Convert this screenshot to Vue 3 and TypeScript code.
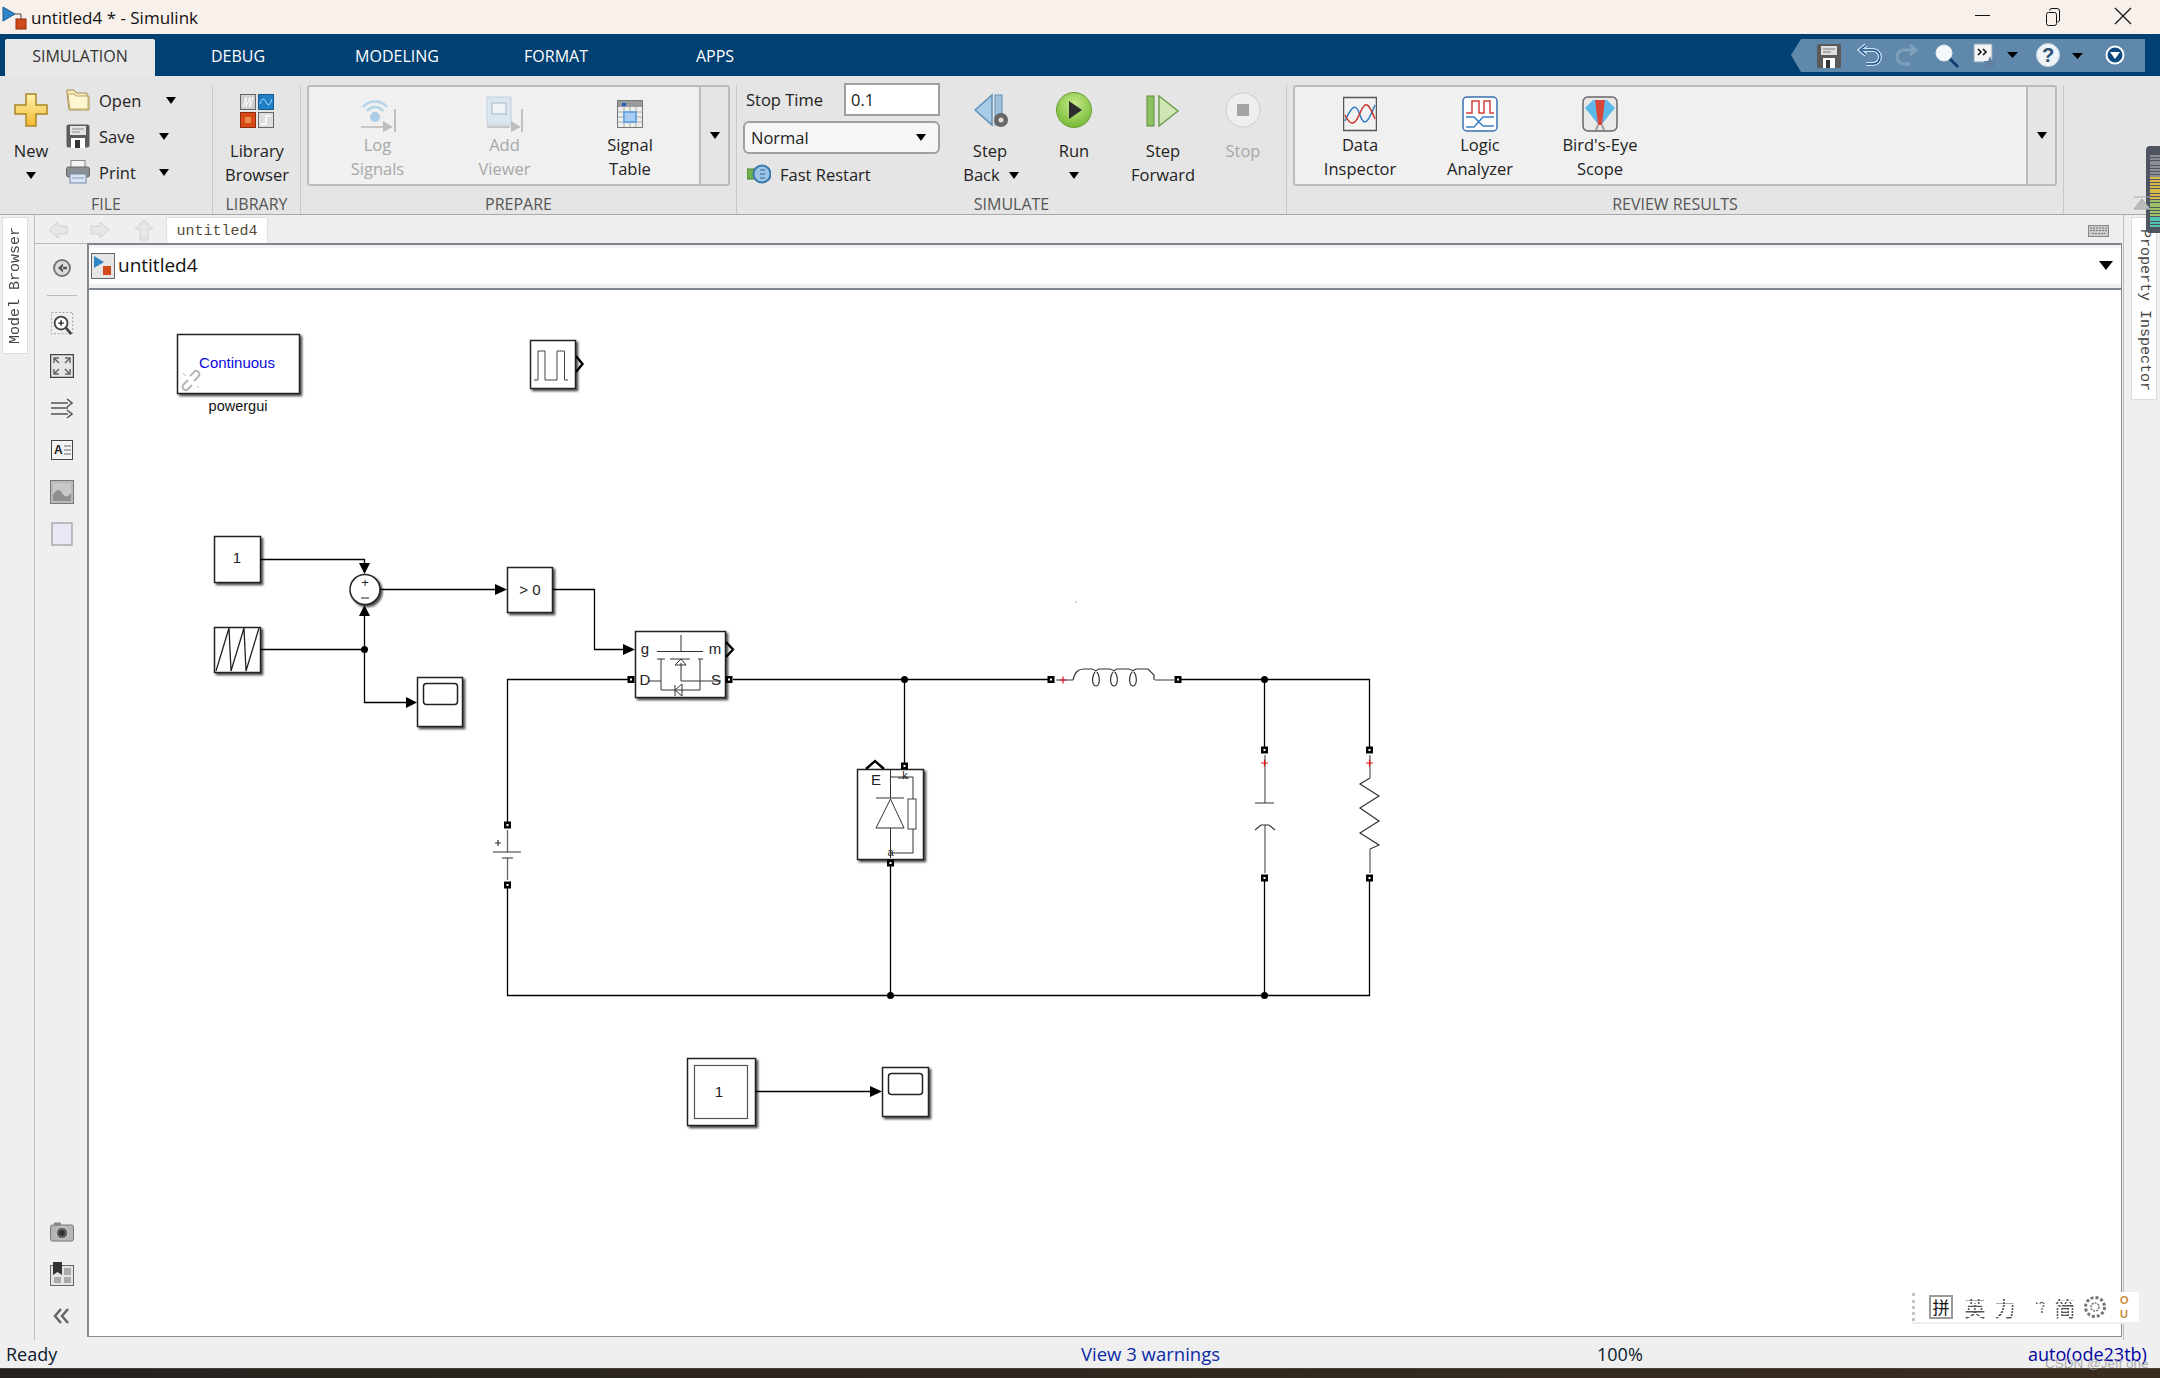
<script setup lang="ts">
type Block = { x: number; y: number; w: number; h: number }

const tabs = ['DEBUG', 'MODELING', 'FORMAT', 'APPS']

const blocks: Block[] = [
  { x: 177.5, y: 334.5, w: 122, h: 59 },
  { x: 530.5, y: 340.5, w: 45, h: 48 },
  { x: 214.5, y: 536.5, w: 46, h: 46 },
  { x: 214.5, y: 627.5, w: 46, h: 45 },
  { x: 507.5, y: 567.5, w: 45, h: 45 },
  { x: 417.5, y: 677.5, w: 45, h: 49 },
  { x: 635.5, y: 631.5, w: 90, h: 66 },
  { x: 857.5, y: 769.5, w: 66, h: 90 },
  { x: 687.5, y: 1058.5, w: 68, h: 67 },
  { x: 882.5, y: 1067.5, w: 46, h: 49 },
]

const wires = [
  '260,559.5 364.5,559.5 364.5,564',
  '380,589.5 497,589.5',
  '553,589.5 594.5,589.5 594.5,649.5 624,649.5',
  '260,649.5 364.5,649.5',
  '364.5,615 364.5,702.5 407,702.5',
  '631,679.5 507.5,679.5 507.5,825',
  '507.5,885 507.5,995.5 1369.5,995.5 1369.5,878',
  '733,679.5 1051,679.5',
  '1178,679.5 1369.5,679.5 1369.5,750',
  '904.5,679.5 904.5,766',
  '1264.5,679.5 1264.5,750',
  '1264.5,878 1264.5,995.5',
  '890.5,863 890.5,995.5',
  '755,1091.5 872,1091.5',
]

const grayWires = [
  '1056,680 1073,680',
  '1155,680 1174,680',
  '1265,755 1265,803',
  '1265,825 1265,873',
  '1370,755 1370,778',
  '1370,849 1370,873',
  '507.5,830 507.5,852',
  '507.5,858 507.5,880',
]

const dots = [
  [364.5, 649.5],
  [904.5, 679.5],
  [1264.5, 679.5],
  [890.5, 995.5],
  [1264.5, 995.5],
]

const ports = [
  [631, 679.5],
  [729, 679.5],
  [904.5, 766],
  [890.5, 863],
  [1051, 679.5],
  [1178, 679.5],
  [1264.5, 750],
  [1369.5, 750],
  [1264.5, 878],
  [1369.5, 878],
  [507.5, 825],
  [507.5, 885],
]

const arrows = [
  '359,563 370,563 364.5,574',
  '359,616 370,616 364.5,605',
  '495,584 507,589.5 495,595',
  '623,644 635,649.5 623,655',
  '406,697 417,702.5 406,708',
  '870,1086 882,1091.5 870,1097',
]

const plusMarks = [
  [1063, 680],
  [1264.5, 763],
  [1369.5, 763],
]

const meterBars = Array.from({ length: 26 }, (_, i) => i)
function meterColor(i: number) {
  if (i < 8) return '#8a8f96'
  if (i < 16) return '#d9b948'
  if (i < 22) return '#9ec46a'
  return '#4fc4b0'
}
</script>

<template>
  <div class="app">
    <header class="titlebar">
      <svg class="appicon" width="25" height="25" viewBox="0 0 25 25">
        <path d="M1 2 L13 9 L1 16 Z" fill="#2e86c8" stroke="#1b5d94" />
        <path d="M13 9 H19 V15" fill="none" stroke="#444" />
        <rect x="14" y="14" width="10" height="10" fill="#d2491c" stroke="#8c2c0c" />
      </svg>
      <span class="title">untitled4 * - Simulink</span>
      <div class="winbtns">
        <span class="winbtn"><svg width="16" height="16" viewBox="0 0 16 16"><path d="M0 8.5H15" stroke="#111" /></svg></span>
        <span class="winbtn"><svg width="16" height="20" viewBox="0 0 16 20"><rect x="1.5" y="5.5" width="10" height="13" rx="2" fill="none" stroke="#111" /><path d="M4.5 3.5 Q4.5 1.5 7 1.5 H12 Q14.5 1.5 14.5 4 V13 Q14.5 15 12.5 15" fill="none" stroke="#111" /></svg></span>
        <span class="winbtn"><svg width="18" height="18" viewBox="0 0 18 18"><path d="M1 1L17 17M17 1L1 17" stroke="#111" stroke-width="1.2" /></svg></span>
      </div>
    </header>

    <nav class="tabbar">
      <div class="tab active">SIMULATION</div>
      <div v-for="t in tabs" :key="t" class="tab">{{ t }}</div>
      <svg class="qat" width="354" height="33" viewBox="1791 39 354 33">
        <path d="M1791 55 L1801 39 H2145 V72 H1801 Z" fill="#5f88ab" />
        <rect x="1817" y="44" width="24" height="24" rx="2" fill="#5a5a5a" />
        <rect x="1821" y="46" width="16" height="9" fill="#e0e0e0" />
        <path d="M1823 49H1835M1823 52H1831" stroke="#777" />
        <rect x="1823" y="58" width="12" height="10" fill="#fff" />
        <rect x="1826" y="60" width="4" height="8" fill="#333" />
        <path d="M1866 64 H1873 A7 7 0 0 0 1873 50 H1862 M1866 45 L1860 50 L1866 55" fill="none" stroke="#cfe3f4" stroke-width="4" />
        <path d="M1866 64 H1873 A7 7 0 0 0 1873 50 H1862 M1866 45 L1860 50 L1866 55" fill="none" stroke="#174f86" stroke-width="1.5" />
        <path d="M1910 64 H1904 A7 7 0 0 1 1904 50 H1914 M1910 45 L1916 50 L1910 55" fill="none" stroke="#7f9fbb" stroke-width="3" />
        <circle cx="1944" cy="53" r="8" fill="#f4f8fb" stroke="#dfe8ef" />
        <path d="M1950 59 L1958 67" stroke="#123f6d" stroke-width="3" />
        <path d="M1974 44 H1992 V62 H1974 Z" fill="#f4f4f4" stroke="#8da3b6" />
        <path d="M1978 49 L1981 52 L1978 55M1983 49 L1986 52 L1983 55" fill="none" stroke="#111" stroke-width="1.5" />
        <path d="M1990 56 L1992 61 L1997 61 L1993 64 L1995 68 L1990 66 L1985 68 L1987 64 L1983 61 L1988 61 Z" fill="#5f7f9c" />
        <path d="M2007 52 H2018 L2012.5 58 Z" fill="#000" />
        <ellipse cx="2048" cy="55" rx="11.5" ry="11.5" fill="#eef3f7" stroke="#c4d2de" />
        <text x="2048" y="62" text-anchor="middle" class="qathelp">?</text>
        <path d="M2072 53 H2083 L2077.5 59 Z" fill="#000" />
        <circle cx="2115" cy="55" r="8.5" fill="#0d4a80" stroke="#fff" stroke-width="2" />
        <path d="M2110 52 H2120 L2115 59 Z" fill="#fff" />
      </svg>
    </nav>

    <section class="ribbon">
      <div class="group file">
        <div class="group-body">
          <div class="rbtn new">
            <svg class="ricon" width="34" height="36" viewBox="0 0 34 36">
              <defs>
                <linearGradient id="plus" x1="0" y1="0" x2="0" y2="1">
                  <stop offset="0" stop-color="#fff3b0" />
                  <stop offset="1" stop-color="#f2b92e" />
                </linearGradient>
              </defs>
              <path d="M12 2 H22 V13 H33 V22 H22 V34 H12 V22 H1 V13 H12 Z" fill="url(#plus)" stroke="#a98723" stroke-width="1.5" />
            </svg>
            <span>New</span>
            <i class="caret line-caret"></i>
          </div>
          <div class="filelist">
            <div class="filerow">
              <svg width="24" height="24" viewBox="0 0 24 24">
                <path d="M1 2 H8 L10 5 H21 V8 L23 8 V22 H3 L1 5 Z" fill="#f8edb7" stroke="#a98d52" />
                <path d="M2 6 H8 L10 8 H22 V21 H4 Z" fill="#fdf6cf" stroke="#bda76d" />
              </svg>
              <span class="filelabel open-label">Open</span>
              <i class="caret"></i>
            </div>
            <div class="filerow">
              <svg width="24" height="24" viewBox="0 0 24 24">
                <rect x="0.5" y="0.5" width="23" height="23" rx="2" fill="#5c5c5c" />
                <rect x="4" y="2" width="16" height="9" fill="#e4e4e4" />
                <path d="M6 5 H18 M6 8 H14" stroke="#888" />
                <rect x="5" y="14" width="14" height="10" fill="#fff" />
                <rect x="9" y="16" width="5" height="8" fill="#333" />
              </svg>
              <span class="filelabel">Save</span>
              <i class="caret"></i>
            </div>
            <div class="filerow">
              <svg width="24" height="24" viewBox="0 0 24 24">
                <rect x="5" y="0.5" width="14" height="8" fill="#f4f4f4" stroke="#888" />
                <rect x="0.5" y="7" width="23" height="10" rx="2" fill="#8a8f94" stroke="#666" />
                <rect x="4" y="14" width="16" height="9" fill="#d6e4f4" stroke="#7a8ea6" />
                <path d="M6 18 H18" stroke="#99b" />
              </svg>
              <span class="filelabel">Print</span>
              <i class="caret"></i>
            </div>
          </div>
        </div>
        <div class="group-label">FILE</div>
      </div>

      <div class="group library">
        <div class="group-body">
          <div class="rbtn fill">
            <svg class="ricon" width="34" height="36" viewBox="0 0 34 36">
              <rect x="0.5" y="2.5" width="15" height="15" fill="#cfcfcf" stroke="#666" />
              <path d="M3 15 L6 5 V15 L10 5 V15 L13 5" fill="none" stroke="#fff" />
              <rect x="18.5" y="2.5" width="15" height="15" fill="#1f7fc4" stroke="#145a90" />
              <path d="M20 12 Q23 3 26 10 T32 7" fill="none" stroke="#9fd8ff" />
              <rect x="0.5" y="20.5" width="15" height="15" fill="#d9491a" stroke="#8c2c0c" />
              <rect x="5" y="25" width="6" height="6" fill="#f08a4a" />
              <rect x="18.5" y="20.5" width="15" height="15" fill="#dedede" stroke="#666" />
              <path d="M21 32 H26 V24 H31" fill="none" stroke="#fff" stroke-width="1.5" />
            </svg>
            <span>Library</span>
            <span>Browser</span>
          </div>
        </div>
        <div class="group-label">LIBRARY</div>
      </div>

      <div class="group prepare">
        <div class="group-body">
          <div class="gallery prepare-gallery">
            <div class="gbtn disabled log">
              <svg class="ricon" width="38" height="36" viewBox="0 0 38 36">
                <path d="M4 11 A16 16 0 0 1 28 11 M8 15 A10 10 0 0 1 24 15" fill="none" stroke="#b4d4ea" stroke-width="2.5" />
                <circle cx="16" cy="21" r="5" fill="#a9cde8" />
                <path d="M2 31 H24" stroke="#c6c6c6" stroke-width="2" />
                <path d="M24 25 L34 31 L24 36 Z" fill="#bdbdbd" />
                <path d="M36 13 V36" stroke="#c0c0c0" stroke-width="2" />
              </svg>
              <span>Log</span>
              <span>Signals</span>
            </div>
            <div class="gbtn disabled viewer">
              <svg class="ricon" width="38" height="36" viewBox="0 0 38 36">
                <rect x="1" y="1" width="24" height="28" fill="#dbe6ee" stroke="#c3d0da" />
                <rect x="6" y="7" width="14" height="11" fill="#eef4f8" stroke="#b9c9d6" stroke-width="1.5" />
                <path d="M1 31 H24" stroke="#c6c6c6" stroke-width="2" />
                <path d="M25 25 L35 31 L25 36 Z" fill="#bdbdbd" />
                <path d="M36 13 V36" stroke="#c0c0c0" stroke-width="2" />
              </svg>
              <span>Add</span>
              <span>Viewer</span>
            </div>
            <div class="gbtn table">
              <svg class="ricon" width="26" height="28" viewBox="0 0 26 28">
                <rect x="0.5" y="0.5" width="25" height="27" fill="#eee" stroke="#777" />
                <rect x="1" y="1" width="24" height="6" fill="#9a9a9a" />
                <rect x="5" y="3" width="4" height="3" fill="#1f5fc4" />
                <path d="M1 12 H25 M1 17 H25 M1 22 H25 M7 7 V27 M13 7 V27 M19 7 V27" stroke="#aaa" />
                <rect x="7" y="12" width="12" height="10" fill="#a9cdf2" stroke="#5a9be0" stroke-width="1.5" />
              </svg>
              <span>Signal</span>
              <span>Table</span>
            </div>
            <div class="gallery-more"><i class="caret"></i></div>
          </div>
        </div>
        <div class="group-label">PREPARE</div>
      </div>

      <div class="group simulate">
        <div class="group-body">
          <div class="simform">
            <div class="stoprow">
              <span>Stop Time</span>
              <div class="stopinput">0.1</div>
            </div>
            <div class="modeselect"><span>Normal</span><i class="caret"></i></div>
            <div class="fastrow">
              <svg width="24" height="24" viewBox="0 0 24 24">
                <rect x="0" y="7" width="7" height="10" fill="#6fb04a" stroke="#4b7f2e" />
                <circle cx="15" cy="12" r="8.5" fill="#9cc4e4" stroke="#3a78ad" stroke-width="2" />
                <path d="M13 8 H18 M13 12 H18 M13 16 H18" stroke="#2e679a" />
              </svg>
              <span>Fast Restart</span>
            </div>
          </div>
          <div class="rbtn stepback">
            <svg class="ricon" width="36" height="36" viewBox="0 0 36 36">
              <path d="M18 3 L1 18 L18 33 Z" fill="#a8cbe6" stroke="#5e8fb6" stroke-width="1.5" />
              <rect x="21" y="3" width="7" height="30" fill="#9fc2de" stroke="#5e8fb6" />
              <circle cx="27" cy="28" r="7" fill="#666" />
              <circle cx="27" cy="28" r="2.5" fill="#ddd" />
            </svg>
            <span>Step</span>
            <span class="with-caret">Back <i class="caret"></i></span>
          </div>
          <div class="rbtn run">
            <svg class="ricon" width="36" height="36" viewBox="0 0 36 36">
              <defs>
                <radialGradient id="rungreen" cx=".5" cy=".35" r=".7">
                  <stop offset="0" stop-color="#c9ec8e" />
                  <stop offset="1" stop-color="#6fb52e" />
                </radialGradient>
              </defs>
              <circle cx="18" cy="18" r="17.5" fill="url(#rungreen)" stroke="#6a9e3a" />
              <path d="M13 9 L26 18 L13 27 Z" fill="#2c2c2c" />
            </svg>
            <span>Run</span>
            <i class="caret line-caret"></i>
          </div>
          <div class="rbtn stepfwd">
            <svg class="ricon" width="34" height="36" viewBox="0 0 34 36">
              <rect x="1" y="4" width="7" height="30" fill="#8cc063" stroke="#5d8e3b" />
              <path d="M13 4 L32 19 L13 34 Z" fill="#cfe6b4" stroke="#6f9e4d" stroke-width="1.5" />
            </svg>
            <span>Step</span>
            <span>Forward</span>
          </div>
          <div class="rbtn disabled stop">
            <svg class="ricon" width="36" height="36" viewBox="0 0 36 36">
              <circle cx="18" cy="18" r="17" fill="#efefef" stroke="#ccc" />
              <rect x="12" y="12" width="12" height="12" fill="#a4a4a4" />
            </svg>
            <span>Stop</span>
          </div>
        </div>
        <div class="group-label">SIMULATE</div>
      </div>

      <div class="group review">
        <div class="group-body">
          <div class="gallery review-gallery">
            <div class="gbtn data">
              <svg class="ricon" width="34" height="34" viewBox="0 0 34 34">
                <rect x="0.5" y="0.5" width="33" height="33" fill="#f2f2f2" stroke="#555" stroke-width="1.5" />
                <path d="M2 24 C9 8 13 6 17 18 S25 26 32 8" fill="none" stroke="#2d79c7" stroke-width="1.5" />
                <path d="M2 18 C8 30 12 28 17 16 S25 4 32 22" fill="none" stroke="#c9352b" stroke-width="1.5" />
              </svg>
              <span>Data</span>
              <span>Inspector</span>
            </div>
            <div class="gbtn logic">
              <svg class="ricon" width="36" height="36" viewBox="0 0 36 36">
                <rect x="1" y="1" width="34" height="34" rx="4" fill="#fff" stroke="#3a6fb0" stroke-width="1.5" />
                <path d="M4 17 H10 V5 H17 V17 H22 V5 H28 V17 H32" fill="none" stroke="#d2413a" stroke-width="1.5" />
                <path d="M4 21 H12 L21 30 H32 M4 31 H12 L21 21 H32" fill="none" stroke="#3a80c4" stroke-width="1.5" />
              </svg>
              <span>Logic</span>
              <span>Analyzer</span>
            </div>
            <div class="gbtn bird">
              <svg class="ricon" width="36" height="36" viewBox="0 0 36 36">
                <rect x="1" y="1" width="34" height="34" rx="5" fill="#e9e9e9" stroke="#666" stroke-width="1.5" />
                <path d="M3 12 L11 4 H25 L33 12 L20 28 H16 Z" fill="#5db8ec" />
                <path d="M13 4 H23 L20 29 H16 Z" fill="#d7483a" />
                <path d="M16 29 L14 34 M20 29 L22 34" stroke="#999" stroke-width="2" />
              </svg>
              <span>Bird's-Eye</span>
              <span>Scope</span>
            </div>
            <div class="gallery-more"><i class="caret"></i></div>
          </div>
        </div>
        <div class="group-label">REVIEW RESULTS</div>
      </div>
    </section>

    <div class="work">
      <aside class="leftrail">
        <div class="sidetab browser"><span>Model Browser</span></div>
      </aside>

      <div class="center">
        <div class="crumbs">
          <div class="navicons">
            <svg width="20" height="18" viewBox="0 0 20 18"><path d="M1 9 L10 1 V5 H19 V13 H10 V17 Z" fill="#e6e6e6" stroke="#d0d0d0" /></svg>
            <svg width="20" height="18" viewBox="0 0 20 18"><path d="M19 9 L10 1 V5 H1 V13 H10 V17 Z" fill="#e6e6e6" stroke="#d0d0d0" /></svg>
            <svg class="nav-up" width="20" height="22" viewBox="0 0 20 22"><path d="M10 1 L19 10 H14 V21 H6 V10 H1 Z" fill="#e6e6e6" stroke="#d0d0d0" /></svg>
          </div>
          <div class="doctab">untitled4</div>
          <svg class="keyboard" width="21" height="12" viewBox="0 0 21 12">
            <rect x="0.5" y="0.5" width="20" height="11" fill="#ccc" stroke="#888" />
            <path d="M2 3 H19 M2 5.5 H19 M4 8.5 H17" stroke="#777" stroke-dasharray="2 1" />
          </svg>
        </div>

        <div class="editor">
          <div class="toolstrip">
            <svg width="20" height="20" viewBox="0 0 20 20">
              <circle cx="10" cy="10" r="8" fill="#ddd" stroke="#777" stroke-width="2" />
              <path d="M11 5.5 L6 10 L11 14.5 Z M10 8.8 H15 V11.2 H10 Z" fill="#555" />
            </svg>
            <div class="stripline"></div>
            <svg width="24" height="24" viewBox="0 0 24 26">
              <rect x="0.5" y="0.5" width="23" height="23" fill="#efefef" stroke="#999" stroke-dasharray="2 2" />
              <circle cx="11" cy="12" r="7" fill="#fff" stroke="#444" stroke-width="2" />
              <path d="M8 12 H14 M11 9 V15" stroke="#222" stroke-width="1.5" />
              <path d="M16 17 L22 24" stroke="#444" stroke-width="3" />
            </svg>
            <svg width="24" height="24" viewBox="0 0 24 24">
              <rect x="0.5" y="0.5" width="23" height="23" fill="#e6e6e6" stroke="#444" stroke-width="1.5" />
              <path d="M4 9 V4 H9 M4 4 L9 9 M20 9 V4 H15 M20 4 L15 9 M4 15 V20 H9 M4 20 L9 15 M20 15 V20 H15 M20 20 L15 15" fill="none" stroke="#666" stroke-width="1.5" />
            </svg>
            <svg width="22" height="24" viewBox="0 0 22 24">
              <path d="M0 7 H17 M0 12 H17 M0 18 H17" stroke="#555" stroke-width="1.5" />
              <path d="M16 3 L21 7 L16 11 M16 14 L21 18 L16 22" fill="none" stroke="#555" stroke-width="1.5" />
            </svg>
            <svg width="22" height="24" viewBox="0 0 22 24">
              <rect x="0.5" y="2.5" width="21" height="19" fill="#f4f4f4" stroke="#444" />
              <text x="3" y="16" class="toola">A</text>
              <path d="M13 8 H20 M13 12 H20 M13 16 H20" stroke="#666" />
            </svg>
            <svg width="24" height="24" viewBox="0 0 24 24">
              <rect x="0.5" y="0.5" width="23" height="23" fill="#b9b9b9" stroke="#777" />
              <rect x="3" y="3" width="18" height="18" fill="#c8c8c8" />
              <path d="M3 15 Q8 6 12 13 T21 13 V21 H3 Z" fill="#8f8f8f" />
            </svg>
            <svg width="22" height="24" viewBox="0 0 22 24">
              <rect x="1" y="1" width="20" height="22" fill="#e8e8f6" stroke="#aaa" stroke-width="1.5" />
            </svg>
            <div class="stripspace"></div>
            <svg width="24" height="24" viewBox="0 0 24 24">
              <rect x="0.5" y="5" width="23" height="16" rx="2" fill="#b5b5b5" stroke="#777" />
              <rect x="4" y="2.5" width="7" height="3" fill="#888" />
              <circle cx="12" cy="13" r="6" fill="#666" stroke="#ddd" />
              <circle cx="12" cy="13" r="3" fill="#333" />
            </svg>
            <svg width="24" height="24" viewBox="0 0 24 24">
              <rect x="0.5" y="3.5" width="23" height="20" fill="#e4e4e4" stroke="#666" />
              <rect x="14" y="6" width="7" height="7" fill="#aaa" />
              <rect x="14" y="15" width="7" height="6" fill="#aaa" />
              <rect x="4" y="15" width="7" height="6" fill="#aaa" />
              <path d="M3 0 H12 V13 L7.5 10 L3 13 Z" fill="#333" />
            </svg>
            <svg width="18" height="24" viewBox="0 0 18 24">
              <path d="M8 5 L2 12 L8 19 M15 5 L9 12 L15 19" fill="none" stroke="#666" stroke-width="2.5" />
            </svg>
          </div>

          <div class="doc">
            <div class="addressbar">
              <svg width="24" height="26" viewBox="0 0 24 26">
                <rect x="0.5" y="0.5" width="23" height="25" fill="#e6e6e6" stroke="#666" />
                <path d="M3 3 L13 9 L3 15 Z" fill="#2e86c8" />
                <rect x="12" y="13" width="8" height="9" fill="#d2491c" />
              </svg>
              <span class="addressname">untitled4</span>
              <i class="caret big"></i>
            </div>

            <svg class="canvas" viewBox="89 290 2031 1047" width="2031" height="1047">
              <defs>
                <filter id="blockshadow" x="-20%" y="-20%" width="150%" height="150%">
                  <feDropShadow dx="2" dy="2" stdDeviation="1.2" flood-color="#000" flood-opacity=".7" />
                </filter>
              </defs>

              <rect
                v-for="(b, i) in blocks"
                :key="'b' + i"
                :x="b.x"
                :y="b.y"
                :width="b.w"
                :height="b.h"
                fill="#fff"
                stroke="#222"
                stroke-width="1.5"
                filter="url(#blockshadow)"
              />
              <circle cx="365" cy="589.5" r="15" fill="#fff" stroke="#222" stroke-width="1.5" filter="url(#blockshadow)" />

              <polyline v-for="(w, i) in wires" :key="'w' + i" :points="w" class="wire" />
              <polyline v-for="(w, i) in grayWires" :key="'g' + i" :points="w" class="gwire" />
              <polygon v-for="(a, i) in arrows" :key="'a' + i" :points="a" fill="#000" />
              <circle v-for="(d, i) in dots" :key="'d' + i" :cx="d[0]" :cy="d[1]" r="3.5" fill="#000" />
              <g v-for="(p, i) in ports" :key="'p' + i">
                <rect :x="p[0] - 3.5" :y="p[1] - 3.5" width="7" height="7" fill="#000" />
                <rect :x="p[0] - 1" :y="p[1] - 1" width="2" height="2" fill="#fff" />
              </g>
              <g v-for="(m, i) in plusMarks" :key="'m' + i">
                <path :d="`M${m[0] - 3.5} ${m[1]}h7M${m[0]} ${m[1] - 3.5}v7`" stroke="#e01010" stroke-width="1.2" />
              </g>

              <text x="237" y="368" class="blocktext blue">Continuous</text>
              <text x="238" y="411" class="blocktext label">powergui</text>
              <g fill="none" stroke="#b5b5b5" stroke-width="2">
                <path d="M190 376 L195 371 A3.5 3.5 0 0 1 199 376 L194 381" />
                <path d="M188 380 L183 385 A3.5 3.5 0 0 0 187 390 L192 385" />
                <path d="M183 373 L186 376 M197 386 L199 388" stroke-width="1" />
              </g>

              <polyline points="534,380 538,380 538,351 545,351 545,380 557,380 557,351 564.5,351 564.5,380 568,380" class="thin" />
              <polyline points="576,356 582.5,364 576,372" class="chevron" />

              <text x="237" y="563" class="blocktext">1</text>
              <text x="365" y="587" class="blocktext small">+</text>
              <path d="M361 598 H369" stroke="#222" />
              <text x="530" y="595" class="blocktext">&gt; 0</text>
              <polyline points="216,671 229,628 231,671 244,628 246,671 259,628" class="thin dark" />

              <rect x="423.5" y="683.5" width="34" height="21" rx="3" fill="#fff" stroke="#222" stroke-width="1.5" />
              <rect x="888.5" y="1073.5" width="34" height="21" rx="3" fill="#fff" stroke="#222" stroke-width="1.5" />

              <text x="645" y="654" class="blocktext">g</text>
              <text x="715" y="654" class="blocktext">m</text>
              <text x="645" y="685" class="blocktext">D</text>
              <text x="716" y="685" class="blocktext">S</text>
              <polyline points="726,642 733,649.5 726,657" class="chevron" />
              <g class="thin-group">
                <path d="M681 635 V651 M657 651.5 H703 M657 659 H665 M670 659 H690 M698 659 H703 M661 659 V690 H700 V659 M681 663 V681 H721 M648 681 H661 M675 685 V696 M682 684 L675 690 L682 696 Z M675 665 L681 659 L686 665 Z" />
              </g>

              <polyline points="866,769 875,761 884,769" class="chevron" />
              <text x="876" y="785" class="blocktext">E</text>
              <g class="thin-group">
                <path d="M890.5 770 V798 M876 798 H904 M890.5 799 L876 828 H904 Z M890.5 828 V858 M890.5 777 H913 V799 M913 829 V853 H890.5 M898 778 H909" />
                <rect x="908" y="799" width="8" height="30" fill="#fff" />
              </g>
              <text x="890.5" y="856" class="blocktext small-letter">a</text>
              <text x="905" y="779" class="blocktext small-letter">k</text>

              <path class="coil" d="M1073 680 C1075 672 1078 669 1084 669 H1092 C1101 671 1101 686 1096 686 C1091 686 1091 672 1099 669 H1110 C1119 671 1119 686 1114 686 C1109 686 1109 672 1117 669 H1129 C1138 671 1138 686 1133 686 C1128 686 1128 672 1136 669 H1148 L1154 675 V680" />
              <path class="coil" d="M1255 803 H1274 M1255 830 L1261 825 H1269 L1275 830" />
              <polyline class="coil" points="1370,778 1360,784 1379,796 1360,808 1379,821 1360,833 1379,845 1370,849" />
              <path class="coil" d="M493 852 H521 M502 858 H513 M495 843 H501 M498 840 V846" />

              <text x="719" y="1097" class="blocktext">1</text>
              <rect x="694.5" y="1065.5" width="53" height="53" fill="none" stroke="#555" stroke-width="1.2" />
              <circle cx="1076" cy="602" r="1" fill="#ccc" />
            </svg>
          </div>
        </div>
      </div>

      <aside class="rightrail">
        <div class="sidetab inspector"><span>Property Inspector</span></div>
      </aside>
    </div>

    <footer class="statusbar">
      <span class="status-ready">Ready</span>
      <span class="status-warn">View 3 warnings</span>
      <span class="status-zoom">100%</span>
      <span class="status-solver">auto(ode23tb)</span>
    </footer>
    <div class="taskbar"></div>

    <div class="ime">
      <span class="ime-grip"></span>
      <span class="ime-key boxed">拼</span>
      <span class="ime-key faded">英</span>
      <span class="ime-key faded">力</span>
      <span class="ime-key faded small">‘?</span>
      <span class="ime-key faded">简</span>
      <svg class="ime-gear" width="24" height="24" viewBox="0 0 24 24">
        <circle cx="12" cy="12" r="9.5" fill="none" stroke="#777" stroke-width="3" stroke-dasharray="3 2" />
        <circle cx="12" cy="12" r="4" fill="none" stroke="#777" stroke-width="1.5" stroke-dasharray="2 1" />
      </svg>
      <span class="ime-side"><b>O</b><b>U</b></span>
    </div>
    <div class="watermark">CSDN @Jeff one</div>

    <div class="meter">
      <span v-for="i in meterBars" :key="i" :style="{ background: meterColor(i) }"></span>
    </div>
    <svg class="ghostbtn" width="17" height="16" viewBox="0 0 17 16">
      <path d="M0 2 H16 M8 4 L16 14 H0 Z" stroke="#aaa" fill="#bbb" />
    </svg>
  </div>
</template>

<style scoped>
.app {
  position: relative;
  width: 2160px;
  height: 1378px;
  overflow: hidden;
  display: flex;
  flex-direction: column;
  font-family: "Open Sans", "Noto Sans", sans-serif;
  color: #222;
  font-size: 16.5px;
  background: #efefef;
}

/* title bar */
.titlebar {
  height: 34px;
  flex: none;
  background: #f8f0eb;
  display: flex;
  align-items: center;
  padding-left: 2px;
}
.title {
  margin-left: 4px;
  font-size: 17px;
  color: #111;
}
.winbtns {
  margin-left: auto;
  margin-right: 2px;
  display: flex;
}
.winbtn {
  width: 70px;
  display: flex;
  justify-content: center;
}

/* tabs */
.tabbar {
  height: 42px;
  flex: none;
  background: #004073;
  display: flex;
  align-items: flex-end;
  position: relative;
  padding-left: 5px;
  font-size: 16px;
  color: #fff;
}
.tab {
  height: 37px;
  line-height: 35px;
  text-align: center;
  width: 100px;
  margin-left: 59px;
}
.tab.active {
  width: 150px;
  margin-left: 0;
  background: #e8e8e8;
  color: #333;
  border-radius: 2px 2px 0 0;
}
.tab.active + .tab {
  margin-left: 33px;
}
.qat {
  position: absolute;
  left: 1791px;
  top: 5px;
}

/* ribbon */
.ribbon {
  height: 139px;
  flex: none;
  box-sizing: border-box;
  background: #e5e5e5;
  border-bottom: 1px solid #a9a9a9;
  padding-top: 9px;
  display: flex;
}
.group {
  box-sizing: border-box;
  display: flex;
  flex-direction: column;
  border-right: 1px solid #c8c8c8;
}
.group-body {
  flex: 1;
  display: flex;
  min-height: 0;
}
.prepare .group-body,
.simulate .group-body,
.review .group-body {
  padding-left: 6px;
}
.group-label {
  height: 22px;
  line-height: 24px;
  text-align: center;
  font-size: 16px;
  color: #555;
}
.file { width: 213px; }
.library { width: 88px; }
.prepare { width: 436px; }
.simulate { width: 550px; }
.review { width: 777px; }

.rbtn,
.gbtn {
  display: flex;
  flex-direction: column;
  align-items: center;
  line-height: 24px;
  box-sizing: border-box;
  flex: none;
}
.rbtn { padding-top: 7px; }
.rbtn .ricon { margin-bottom: 11px; }
.gbtn { padding-top: 9px; }
.gbtn .ricon { margin-bottom: 1px; height: 36px; }
.disabled { color: #a8a8a8; }
.new { width: 62px; }
.fill { width: 88px; }
.log { width: 127px; }
.viewer { width: 127px; }
.table { width: 124px; }
.table .ricon { margin-top: 4px; margin-bottom: 5px; height: 28px; }
.data { width: 130px; }
.logic { width: 110px; }
.bird { width: 130px; }
.stepback { width: 80px; margin-left: 10px; }
.stepback .ricon { margin-left: 3px; }
.run { width: 88px; }
.stepfwd { width: 90px; }
.stop { width: 70px; }

.caret {
  display: inline-block;
  width: 0;
  height: 0;
  border-left: 5.5px solid transparent;
  border-right: 5.5px solid transparent;
  border-top: 7px solid #000;
  flex: none;
}
.caret.big {
  border-left-width: 7.5px;
  border-right-width: 7.5px;
  border-top-width: 9px;
}
.line-caret {
  margin-top: 9px;
}
.with-caret {
  display: flex;
  align-items: center;
  gap: 9px;
  padding-left: 2px;
}

.filelist {
  margin-left: 4px;
  padding-top: 3px;
  display: flex;
  flex-direction: column;
  gap: 12px;
}
.filerow {
  display: flex;
  align-items: center;
  height: 24px;
}
.filelabel {
  margin-left: 9px;
  width: 60px;
}
.open-label {
  width: 67px;
}

.gallery {
  box-sizing: border-box;
  height: 101px;
  background: #f0f0f0;
  border: 2px solid #bcbcbc;
  border-radius: 3px;
  display: flex;
}
.prepare-gallery {
  width: 423px;
  padding-left: 5px;
}
.review-gallery {
  width: 764px;
}
.gallery-more {
  margin-left: auto;
  width: 27px;
  background: #e5e5e5;
  border-left: 2px solid #bcbcbc;
  display: flex;
  align-items: center;
  justify-content: center;
}

.simform {
  width: 197px;
  flex: none;
  margin-top: -2px;
  display: flex;
  flex-direction: column;
}
.stoprow {
  height: 33px;
  display: flex;
  align-items: center;
  justify-content: space-between;
  padding-left: 3px;
}
.stopinput {
  box-sizing: border-box;
  width: 96px;
  height: 33px;
  line-height: 29px;
  background: #fff;
  border: 2px solid #a0a0a0;
  padding-left: 5px;
}
.modeselect {
  box-sizing: border-box;
  margin-top: 5px;
  height: 33px;
  background: #f6f6f6;
  border: 2px solid #a0a0a0;
  border-radius: 6px;
  display: flex;
  align-items: center;
  justify-content: space-between;
  padding: 0 12px 0 6px;
}
.fastrow {
  margin-top: 8px;
  height: 24px;
  display: flex;
  align-items: center;
  gap: 9px;
  padding-left: 4px;
}

/* workspace */
.work {
  flex: 1;
  min-height: 0;
  display: flex;
}
.leftrail {
  box-sizing: border-box;
  width: 35px;
  flex: none;
  border-right: 1px solid #bdbdbd;
  padding: 2px 0 0 2px;
}
.rightrail {
  box-sizing: border-box;
  width: 37px;
  flex: none;
  border-left: 1px solid #bdbdbd;
  padding: 2px 0 0 7px;
}
.sidetab {
  box-sizing: border-box;
  width: 26px;
  background: #fff;
  border: 1px solid #ddd;
  display: flex;
  align-items: center;
  justify-content: center;
  font-family: "Liberation Mono", monospace;
  font-size: 15px;
  color: #444;
}
.sidetab span {
  writing-mode: vertical-rl;
}
.browser {
  height: 137px;
}
.browser span {
  transform: rotate(180deg);
}
.inspector {
  height: 183px;
  padding-top: 4px;
}
.center {
  flex: 1;
  min-width: 0;
  display: flex;
  flex-direction: column;
}
.crumbs {
  height: 28px;
  flex: none;
  display: flex;
  align-items: flex-end;
  padding-left: 13px;
}
.navicons {
  display: flex;
  align-items: center;
  gap: 22px;
  height: 27px;
  width: 118px;
}
.nav-up {
  margin-left: 2px;
}
.doctab {
  box-sizing: border-box;
  width: 102px;
  height: 26px;
  background: #fff;
  border: 1px solid #e0e0e0;
  border-bottom: none;
  font-family: "Liberation Mono", monospace;
  font-size: 15px;
  line-height: 28px;
  text-align: center;
  color: #554a38;
}
.keyboard {
  margin-left: auto;
  margin-right: 14px;
  margin-bottom: 6px;
}
.editor {
  flex: 1;
  min-height: 0;
  display: flex;
}
.toolstrip {
  width: 52px;
  flex: none;
  border-top: 1px solid #bbb;
  box-sizing: border-box;
  display: flex;
  flex-direction: column;
  align-items: center;
  gap: 18px;
  padding: 12px 0 12px 2px;
}
.toolstrip svg {
  height: 24px;
  flex: none;
}
.stripline {
  width: 30px;
  height: 1px;
  background: #bbb;
  margin: -3px 0 -2px;
}
.stripspace {
  flex: 1;
}
.doc {
  flex: 1;
  min-width: 0;
  margin-right: 1px;
  margin-bottom: 3px;
  box-sizing: border-box;
  border-left: 2px solid #878b92;
  border-right: 1px solid #878b92;
  border-bottom: 1px solid #878b92;
  display: flex;
  flex-direction: column;
  background: #fff;
}
.addressbar {
  box-sizing: border-box;
  height: 47px;
  flex: none;
  border-top: 2px solid #80868e;
  border-bottom: 2px solid #80868e;
  box-shadow: inset 0 3px 0 #f4f4f4, inset 0 -4px 0 #f1f1f1;
  display: flex;
  align-items: center;
  padding: 0 8px 2px 2px;
}
.addressname {
  margin-left: 3px;
  margin-bottom: 2px;
  font-size: 19px;
  color: #111;
}
.addressbar .caret {
  margin-left: auto;
}
.canvas {
  display: block;
  flex: none;
}
.wire {
  fill: none;
  stroke: #000;
  stroke-width: 1.3;
}
.gwire {
  fill: none;
  stroke: #666;
  stroke-width: 1.3;
}
.thin {
  fill: none;
  stroke: #444;
  stroke-width: 1;
}
.thin.dark {
  stroke: #222;
  stroke-width: 1.3;
}
.thin-group {
  fill: none;
  stroke: #333;
  stroke-width: 1;
}
.thin-group rect {
  stroke: #444;
}
.chevron {
  fill: none;
  stroke: #000;
  stroke-width: 2.4;
}
.coil {
  fill: none;
  stroke: #333;
  stroke-width: 1.2;
}
.blocktext {
  font-family: "Liberation Sans", Arial, sans-serif;
  font-size: 15px;
  fill: #222;
  text-anchor: middle;
}
.blocktext.blue {
  fill: #0a0ae0;
}
.blocktext.label {
  fill: #111;
  font-size: 14.5px;
}
.blocktext.small {
  font-size: 13px;
}
.blocktext.small-letter {
  font-size: 11px;
}
.qathelp {
  font-family: "Liberation Sans", Arial, sans-serif;
  font-weight: 700;
  font-size: 20px;
  fill: #2b4f72;
  text-anchor: middle;
}
.toola {
  font-family: "Liberation Sans", Arial, sans-serif;
  font-weight: 700;
  font-size: 12px;
  fill: #222;
}

/* status */
.statusbar {
  height: 28px;
  flex: none;
  background: #efefef;
  display: flex;
  align-items: center;
  font-size: 18px;
  color: #0c1a2c;
  padding-left: 6px;
  padding-bottom: 1px;
  box-sizing: border-box;
}
.status-ready { width: 1075px; }
.status-warn { width: 516px; color: #0a2aa8; font-size: 18.5px; }
.status-zoom { width: 431px; color: #0c1a2c; }
.status-solver { color: #0000a0; }
.taskbar {
  height: 10px;
  flex: none;
  background: linear-gradient(90deg, #25221e, #3a2d20);
  border-top: 1px solid #4a4136;
  box-sizing: border-box;
}

/* overlays */
.ime {
  position: absolute;
  left: 1912px;
  top: 1292px;
  width: 227px;
  height: 32px;
  box-sizing: border-box;
  background: #fff;
  border-bottom: 2px solid #eee;
  display: flex;
  align-items: center;
  font-family: "Noto Sans CJK SC", sans-serif;
}
.ime-grip {
  width: 3px;
  height: 28px;
  margin-right: 11px;
  border-left: 3px dotted #c4c4c4;
}
.ime-key {
  width: 24px;
  margin-right: 6px;
  text-align: center;
  font-size: 21px;
  line-height: 24px;
  flex: none;
}
.ime-key.boxed {
  box-sizing: border-box;
  height: 24px;
  line-height: 20px;
  font-size: 17px;
  border: 2px solid #9a9a9a;
  color: #111;
  margin-right: 10px;
}
.ime-key.faded {
  color: #555;
  -webkit-mask-image: repeating-linear-gradient(0deg, #000 0 2px, transparent 2px 3px);
  mask-image: repeating-linear-gradient(0deg, #000 0 2px, transparent 2px 3px);
}
.ime-key.small {
  font-size: 14px;
}
.ime-gear {
  flex: none;
  margin-right: 13px;
}
.ime-side {
  display: flex;
  flex-direction: column;
  font-family: "Liberation Sans", sans-serif;
  font-size: 11px;
  line-height: 14px;
}
.ime-side b {
  color: #c98a3a;
  font-weight: 700;
}
.watermark {
  position: absolute;
  left: 2045px;
  top: 1356px;
  font-family: "Liberation Sans", sans-serif;
  font-size: 13.5px;
  color: rgba(150, 150, 150, 0.75);
}
.meter {
  position: absolute;
  left: 2146px;
  top: 146px;
  width: 14px;
  height: 87px;
  box-sizing: border-box;
  background: #4e5560;
  border-radius: 4px 0 0 4px;
  padding: 9px 0 6px 4px;
  display: flex;
  flex-direction: column;
  justify-content: space-between;
}
.meter span {
  display: block;
  height: 2px;
  width: 10px;
}
.ghostbtn {
  position: absolute;
  left: 2134px;
  top: 195px;
}
</style>

<style>
html,
body {
  margin: 0;
  overflow: hidden;
}
</style>
